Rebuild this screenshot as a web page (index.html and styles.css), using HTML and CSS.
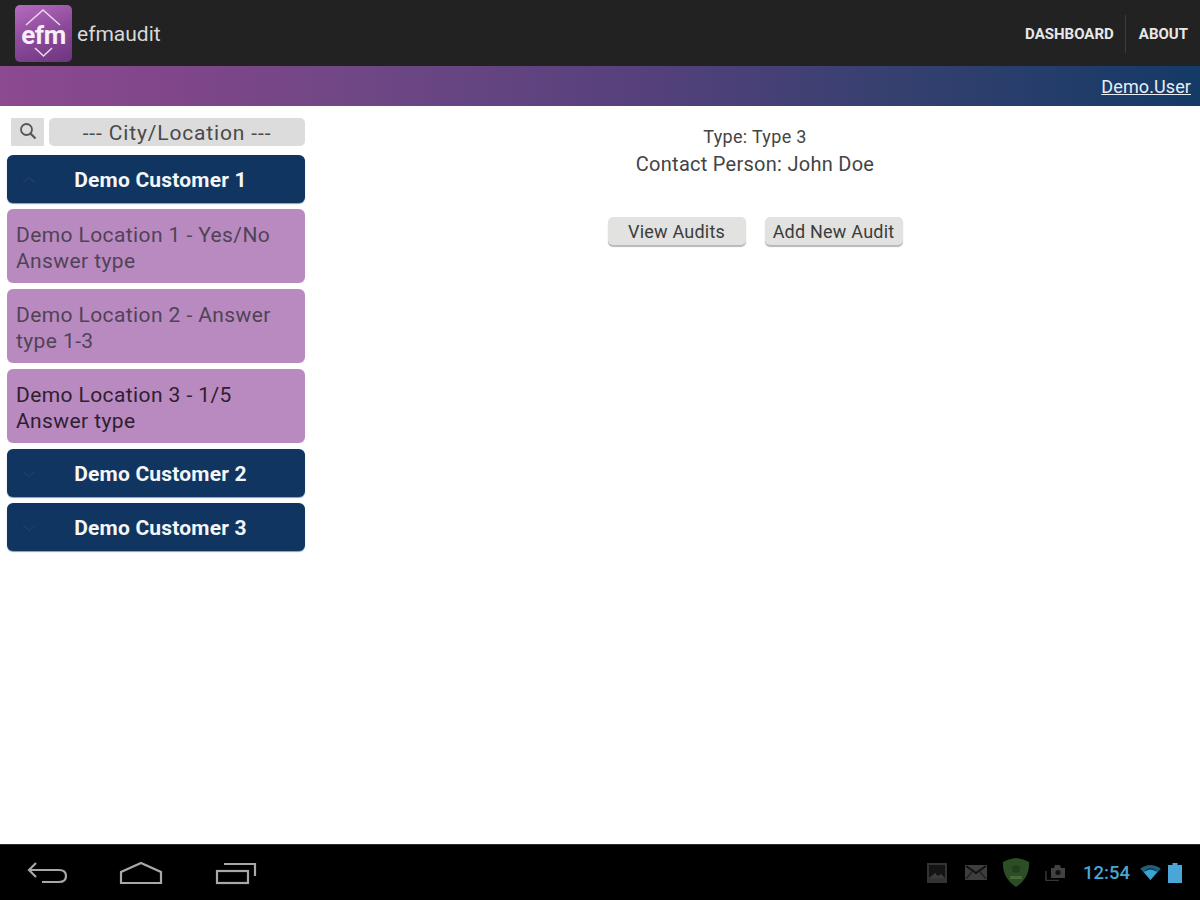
FILE: index.html
```html
<!DOCTYPE html>
<html lang="en">
<head>
<meta charset="utf-8">
<title>efmaudit</title>
<link rel="stylesheet" href="styles.css">
</head>
<body>
<div class="app">
  <header class="topbar">
    <div class="brand">
      <div class="logo">
        <svg class="logo-marks" width="57" height="57" viewBox="0 0 57 57" fill="none" stroke="#e9d6ee" stroke-width="1.6">
          <path d="M11 20 L28 5 L45 20"/>
          <path d="M20 43 L28.5 51 L37 43"/>
        </svg>
        <span class="logo-text">efm</span>
      </div>
      <span class="brand-name">efmaudit</span>
    </div>
    <nav class="nav">
      <span class="nav-item">DASHBOARD</span>
      <span class="nav-sep"></span>
      <span class="nav-item">ABOUT</span>
    </nav>
  </header>
  <div class="userbar"><a class="user-link">Demo.User</a></div>
  <main class="main">
    <aside class="sidebar">
      <div class="search-row">
        <div class="search-btn">
          <svg width="20" height="20" viewBox="0 0 20 20" fill="none" stroke="#555" stroke-width="1.8"><circle cx="8.5" cy="8.5" r="5.5"/><path d="M12.5 12.5 L17.5 17.5" stroke-width="2.2"/></svg>
        </div>
        <div class="city-select">--- City/Location ---</div>
      </div>
      <div class="customer">
        <svg class="chev" width="14" height="6" viewBox="0 0 14 6" fill="none" stroke="#1d4068" stroke-width="1.4"><path d="M1 5.5 L7 .5 L13 5.5"/></svg>
        <span>Demo Customer 1</span>
      </div>
      <div class="location dim">Demo Location 1 - Yes/No Answer type</div>
      <div class="location dim">Demo Location 2 - Answer type 1-3</div>
      <div class="location">Demo Location 3 - 1/5 Answer type</div>
      <div class="customer">
        <svg class="chev" width="14" height="6" viewBox="0 0 14 6" fill="none" stroke="#1d4068" stroke-width="1.4"><path d="M1 .5 L7 5.5 L13 .5"/></svg>
        <span>Demo Customer 2</span>
      </div>
      <div class="customer">
        <svg class="chev" width="14" height="6" viewBox="0 0 14 6" fill="none" stroke="#1d4068" stroke-width="1.4"><path d="M1 .5 L7 5.5 L13 .5"/></svg>
        <span>Demo Customer 3</span>
      </div>
    </aside>
    <section class="detail">
      <p class="type">Type: Type 3</p>
      <p class="contact">Contact Person: John Doe</p>
      <div class="actions">
        <button class="btn">View Audits</button>
        <button class="btn">Add New Audit</button>
      </div>
    </section>
  </main>
  <footer class="sysbar">
    <div class="sys-nav">
      <svg width="41" height="24" viewBox="0 0 41 24" fill="none" stroke="#a8a8a8" stroke-width="2.2"><path d="M9 2 L2 9 L9 16"/><path d="M2 9 H32 Q39 9 39 15 Q39 21 32 21 H15"/></svg>
      <svg width="44" height="24" viewBox="0 0 44 24" fill="none" stroke="#a8a8a8" stroke-width="2.2"><path d="M2 22 V11 L22 2 L42 11 V22 Z"/></svg>
      <svg class="st-recent" width="42" height="24" viewBox="0 0 42 24" fill="none" stroke="#a8a8a8" stroke-width="2.2"><rect x="2" y="10" width="31" height="12"/><path d="M9 3 H40 V15"/></svg>
    </div>
    <div class="sys-status">
      <svg class="st-pic" width="20" height="20" viewBox="0 0 20 20"><rect width="20" height="20" fill="#333"/><rect x="2" y="2" width="16" height="13" fill="#141414"/><path d="M2 15 L8 10 L11 13 L14 11 L18 15 Z" fill="#3c3c3c"/></svg>
      <svg class="st-mail" width="22" height="15" viewBox="0 0 22 15"><rect width="22" height="15" fill="#3e3e3e"/><path d="M1 1 L11 8 L21 1" fill="none" stroke="#111" stroke-width="2"/><path d="M1 14 L7 7 M21 14 L15 7" stroke="#222" stroke-width="1.5"/></svg>
      <svg class="st-shield" width="28" height="29" viewBox="0 0 28 29"><path d="M14 0 Q22 1 27 4 Q28 20 14 29 Q0 20 1 4 Q6 1 14 0 Z" fill="#2c4e25"/><circle cx="14" cy="11" r="4" fill="#223f1c"/><rect x="8" y="18" width="12" height="3" fill="#456a3a"/></svg>
      <svg class="st-cam" width="20" height="16" viewBox="0 0 20 16"><path d="M6 3 H9 L10 0 H15 L16 3 H20 V13 H6 Z" fill="#414141"/><circle cx="13" cy="7.5" r="2.6" fill="#111"/><path d="M1 6 V15.5 H14" fill="none" stroke="#363636" stroke-width="1.5"/></svg>
      <span class="clock">12:54</span>
      <svg class="st-wifi" width="21" height="15" viewBox="0 0 22 16"><path d="M0 4 Q11 -4 22 4 L11 16 Z" fill="#1f5f80"/><path d="M4 7.5 Q11 2 18 7.5 L11 16 Z" fill="#39a3d4"/><path d="M5.6 6 Q11 2 16.4 6" stroke="#0c2f40" stroke-width="1.2" fill="none"/></svg>
      <svg class="st-batt" width="14" height="20" viewBox="0 0 14 20"><path d="M4.5 0 H9.5 V2 H14 V20 H0 V2 H4.5 Z" fill="#4aa6d6"/></svg>
    </div>
  </footer>
</div>
</body>
</html>
```
FILE: styles.css
```css
* { box-sizing: border-box; }
html, body { margin: 0; padding: 0; }
body { font-family: Roboto, "Liberation Sans", sans-serif; background: #fff; }
.app { width: 1200px; height: 900px; display: flex; flex-direction: column; overflow: hidden; }

.topbar { height: 66px; background: #222222; display: flex; justify-content: space-between; align-items: center; flex: none; }
.brand { display: flex; align-items: center; padding-left: 15px; }
.logo { position: relative; width: 57px; height: 57px; border-radius: 5px; background: linear-gradient(160deg, #b56bc0 0%, #8d4a9a 50%, #6c3580 100%); display: flex; align-items: center; justify-content: center; }
.logo-marks { position: absolute; left: 0; top: 0; }
.logo-text { position: relative; color: #f6eef8; font-size: 26px; font-weight: 700; letter-spacing: -0.5px; margin-top: 3px; }
.brand-name { color: #d8d8d8; font-size: 21px; margin-left: 5px; margin-top: 2px; }
.nav { display: flex; align-items: center; padding-right: 12px; padding-top: 1px; }
.nav-item { color: #e8e8e8; font-size: 15px; font-weight: 700; }
.nav-sep { width: 1px; height: 38px; background: #3c3c3c; margin: 0 13px 0 11px; }

.userbar { height: 40px; flex: none; background: linear-gradient(90deg, #8c4a90 0%, #7f4689 15%, #6f4785 30%, #54407b 55%, #35406f 75%, #143a66 100%); display: flex; align-items: center; justify-content: flex-end; padding-right: 9px; }
.user-link { color: #e9eef4; font-size: 18px; text-decoration: underline; letter-spacing: 0.1px; }

.main { flex: 1; display: flex; min-height: 0; }
.sidebar { width: 310px; flex: none; padding: 12px 5px 0 7px; display: flex; flex-direction: column; gap: 6px; }
.search-row { display: flex; align-items: stretch; gap: 5px; padding-left: 4px; height: 28px; margin-bottom: 3px; }
.search-btn { width: 33px; background: #dcdcdc; display: flex; align-items: center; justify-content: center; padding-bottom: 3px; }
.city-select { flex: 1; background: #dcdcdc; border-radius: 5px; color: #4a4a4a; font-size: 21px; letter-spacing: 0.85px; padding-top: 2px; display: flex; align-items: center; justify-content: center; }
.customer { position: relative; height: 48px; background: #103560; border-radius: 6px; color: #f4f6f8; font-size: 21px; font-weight: 700; letter-spacing: 0.2px; display: flex; align-items: center; justify-content: center; box-shadow: 0 1px 1px #8b9cb0; padding: 2px 0 0 9px; }
.chev { position: absolute; left: 15px; top: 22px; }
.location { height: 74px; background: #b98ac0; border-radius: 6px; color: #2e2030; font-size: 21px; line-height: 26px; padding: 13px 9px 0; letter-spacing: 0.4px; }
.location.dim { color: #4f4356; }

.detail { flex: 1; text-align: center; display: flex; flex-direction: column; align-items: center; }
.type { margin: 21px 0 0; font-size: 18px; line-height: 20px; letter-spacing: 0.33px; color: #444; }
.contact { margin: 5px 0 0; font-size: 20px; line-height: 24px; letter-spacing: 0.27px; color: #444; }
.actions { display: flex; gap: 19px; margin-top: 41px; }
.btn { width: 138px; height: 28px; padding: 0; border: 0; border-radius: 5px; background: #e2e2e0; color: #3c3c3c; font-family: inherit; font-size: 18px; letter-spacing: 0.22px; box-shadow: 0 2px 1px #b8b8b6; }

.sysbar { height: 56px; flex: none; background: #000; display: flex; justify-content: space-between; align-items: center; border-top: 1px solid #2a2a2a; }
.sys-nav { display: flex; align-items: center; gap: 51px; padding-left: 27px; }
.st-recent { margin-left: 1px; }
.sys-status { display: flex; align-items: center; padding-right: 18px; }
.st-mail { margin-left: 18px; }
.st-shield { margin-left: 15px; }
.st-cam { margin-left: 15px; }
.clock { color: #4aa6d6; font-size: 18.5px; font-weight: 500; margin-left: 18px; }
.st-wifi { margin-left: 10px; }
.st-batt { margin-left: 7px; }
```
